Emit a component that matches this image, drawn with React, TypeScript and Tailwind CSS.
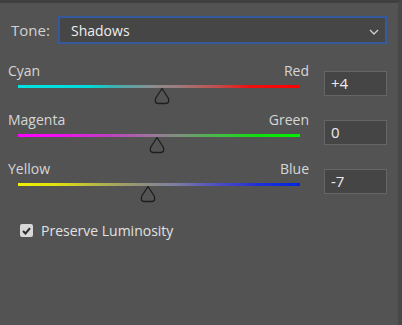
import React from "react";

const font = { fontFamily: '"Open Sans", "Noto Sans", sans-serif' };

function Thumb({ left }: { left: number }) {
  return (
    <svg
      className="absolute top-[2px]"
      style={{ left }}
      width="18"
      height="18"
      viewBox="0 0 18 18"
    >
      <path
        d="M9 1.5 L15.2 11 Q17.2 16.5 12.5 16.5 L5.5 16.5 Q0.8 16.5 2.8 11 Z"
        fill="#535353"
        stroke="#1e1e1e"
        strokeWidth="1.3"
        strokeLinejoin="round"
      />
    </svg>
  );
}

function SliderRow({
  left,
  right,
  value,
  gradient,
  thumb,
}: {
  left: string;
  right: string;
  value: string;
  gradient: string;
  thumb: number;
}) {
  return (
    <div className="flex items-start h-[49px]">
      <div className="ml-[8px] w-[301px] flex flex-col">
        <div className="flex justify-between h-[20px] text-[14px] leading-[20px] text-[#d6d6d6]">
          <span>{left}</span>
          <span>{right}</span>
        </div>
        <div className={`relative mt-[4px] ml-[10px] mr-[9px] h-[3px] ${gradient}`}>
          <Thumb left={thumb} />
        </div>
      </div>
      <div className="ml-[15px] mt-[10px] w-[63px] h-[25px] bg-[#454545] border border-[#666666] pl-[6px] text-[15px] leading-[23px] text-[#ececec]">
        {value}
      </div>
    </div>
  );
}

export default function App() {
  return (
    <div
      className="w-[402px] h-[325px] bg-[#535353] border-t-[3px] border-t-[#404040] border-r-[4px] border-r-[#484848]"
      style={font}
    >
      <div className="flex items-center mt-[13px]">
        <span className="ml-[11px] w-[47px] text-[15px] text-[#d2d2d2]">Tone:</span>
        <div className="w-[329px] h-[28px] border-2 border-[#34599c] bg-[#464646] flex items-center justify-between pl-[11px] pr-[6px]">
          <span className="text-[14px] text-[#ededed]">Shadows</span>
          <svg width="10" height="6" viewBox="0 0 10 6" className="mt-[3px]">
            <path d="M1 1 L5 5 L9 1" fill="none" stroke="#cfcfcf" strokeWidth="1.3" />
          </svg>
        </div>
      </div>
      <div className="mt-[17px]">
        <SliderRow
          left="Cyan"
          right="Red"
          value="+4"
          thumb={135}
          gradient="bg-[linear-gradient(to_right,#00e4e4_0%,#00dada_25%,#3fb0b0_34%,#8a9090_47%,#a07878_58%,#c05050_70%,#ee1010_82%,#ff0000_100%)]"
        />
        <SliderRow
          left="Magenta"
          right="Green"
          value="0"
          thumb={130}
          gradient="bg-[linear-gradient(to_right,#ff00ff_0%,#f010f0_14%,#c040c0_32%,#9a789a_48%,#7a947a_58%,#40c040_72%,#10e010_85%,#00f000_100%)]"
        />
        <SliderRow
          left="Yellow"
          right="Blue"
          value="-7"
          thumb={121}
          gradient="bg-[linear-gradient(to_right,#f0f000_0%,#e0e010_14%,#b0b050_30%,#8e8e80_45%,#8080a0_55%,#5050c0_70%,#2030d8_85%,#0028e0_100%)]"
        />
      </div>
      <div className="flex items-center mt-[12px] ml-[20px]">
        <div className="w-[13px] h-[13px] rounded-[2px] bg-[#d8d8d8] flex items-center justify-center">
          <svg width="9" height="8" viewBox="0 0 9 8">
            <path d="M1 4 L3.5 6.5 L8 1.2" fill="none" stroke="#2a2a2a" strokeWidth="2" />
          </svg>
        </div>
        <span className="ml-[8px] text-[14px] text-[#e2e2e2]">Preserve Luminosity</span>
      </div>
    </div>
  );
}
